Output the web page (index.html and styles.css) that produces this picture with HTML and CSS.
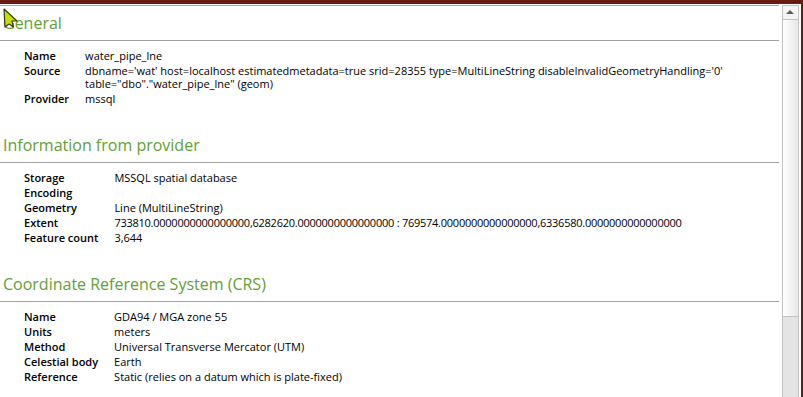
FILE: index.html
```html
<!DOCTYPE html>
<html lang="en">
<head>
    <meta charset="UTF-8">
    <title>Layer Information</title>
    <link rel="stylesheet" href="styles.css">
</head>
<body>

    <div class="window">
        <div class="content">

            <!-- General -->
            <div class="section">
                <h2>General</h2>
                <table>
                    <tr><th>Name</th><td>water_pipe_lne</td></tr>
                    <tr><th>Source</th><td>dbname='wat' host=localhost estimatedmetadata=true srid=28355 type=MultiLineString disableInvalidGeometryHandling='0'<br>table="dbo"."water_pipe_lne" (geom)</td></tr>
                    <tr><th>Provider</th><td>mssql</td></tr>
                </table>
            </div>

            <!-- Information from provider -->
            <div class="section">
                <h2>Information from provider</h2>
                <table>
                    <tr><th>Storage</th><td>MSSQL spatial database</td></tr>
                    <tr><th>Encoding</th><td></td></tr>
                    <tr><th>Geometry</th><td>Line (MultiLineString)</td></tr>
                    <tr><th>Extent</th><td class="num">733810.0000000000000000,6282620.0000000000000000 : 769574.0000000000000000,6336580.0000000000000000</td></tr>
                    <tr><th>Feature count</th><td>3,644</td></tr>
                </table>
            </div>

            <!-- CRS -->
            <div class="section">
                <h2>Coordinate Reference System (CRS)</h2>
                <table>
                    <tr><th>Name</th><td>GDA94 / MGA zone 55</td></tr>
                    <tr><th>Units</th><td>meters</td></tr>
                    <tr><th>Method</th><td>Universal Transverse Mercator (UTM)</td></tr>
                    <tr><th>Celestial body</th><td>Earth</td></tr>
                    <tr><th>Reference</th><td>Static (relies on a datum which is plate-fixed)</td></tr>
                </table>
            </div>

        </div>

        <!-- Scrollbar -->
        <div class="scrollbar">
            <div class="arrow"></div>
            <div class="thumb"></div>
            <div class="track"></div>
        </div>
        <div class="edge"></div>
    </div>

    <!-- Mouse pointer -->
    <svg class="pointer" width="18" height="22" viewBox="0 0 18 22">
        <polygon points="1,1 14,13 9,13 10.5,19 6,16 2,19" fill="#c4e000" stroke="#3a3a10" stroke-width="1.2" stroke-linejoin="round"/>
    </svg>

</body>
</html>
```

FILE: styles.css
```css
body {
    margin: 0;
    padding: 0;
    background: white;
    font-family: 'Open Sans', 'Noto Sans', sans-serif;
    overflow: hidden;
}

.window {
    display: flex;
    height: 397px;
    border-top: 4px solid #6a1915;
    box-sizing: border-box;
}

.content {
    flex: 1;
    border-top: 1px solid #ffffff;
    padding-top: 6px;
    margin-right: 3px;
    box-shadow: inset 0 1px 0 #a8a8a8;
}

.section h2 {
    margin: 0;
    padding: 0 0 5px 3px;
    font-size: 16px;
    line-height: 24px;
    font-weight: normal;
    color: #64a035;
    border-bottom: 1px solid #a0a0a0;
}

.section table {
    margin: 7px 0 27px 24px;
    border-spacing: 0;
    font-size: 11px;
    line-height: 13px;
}

.section th {
    text-align: left;
    vertical-align: top;
    font-weight: 600;
    padding: 1px 16px 1px 0;
    white-space: nowrap;
}

.section td {
    vertical-align: top;
    padding: 1px 0;
}

.section td.num {
    letter-spacing: -0.25px;
}

/* Scrollbar */
.scrollbar {
    width: 15px;
    display: flex;
    flex-direction: column;
    border: 1px solid #c2c2c2;
    border-bottom: none;
    margin-top: 1px;
    background: #e4e4e4;
}

.arrow {
    height: 13px;
    border-bottom: 1px solid #c2c2c2;
    background: #f4f4f4;
    position: relative;
}

.arrow::after {
    content: "";
    position: absolute;
    left: 3px;
    top: 4px;
    border-left: 4px solid transparent;
    border-right: 4px solid transparent;
    border-bottom: 4px solid #5c5c5c;
}

.thumb {
    height: 296px;
    border-bottom: 1px solid #c2c2c2;
    background: linear-gradient(to right, #ffffff, #e8e8e8);
}

.track {
    flex: 1;
}

.edge {
    width: 2px;
    margin-left: 2px;
    background: #6a1915;
}

.pointer {
    position: absolute;
    left: 3px;
    top: 8px;
}
```
